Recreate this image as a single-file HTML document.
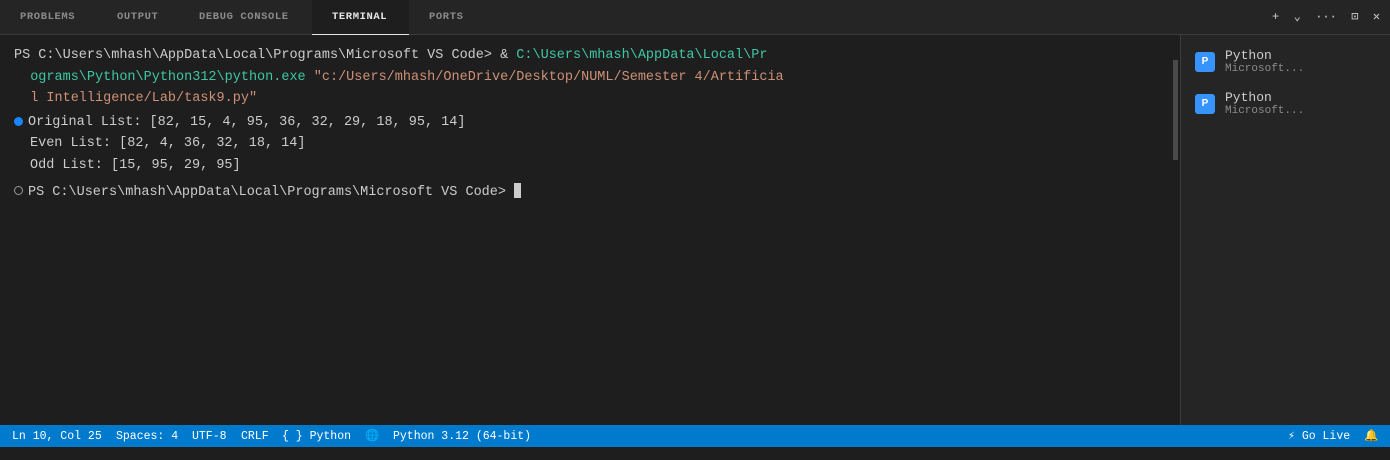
<!DOCTYPE html>
<html><head><style>
*{margin:0;padding:0;box-sizing:border-box}
body{width:1390px;height:460px;background:#1e1e1e;font-family:"Liberation Mono",monospace;overflow:hidden;position:relative;color:#cccccc}
.tabs{position:absolute;left:0;top:0;width:1390px;height:35px;background:#252526;border-bottom:1px solid #3a3a3a}
.tab{position:absolute;top:0;height:34px;line-height:34px;font-family:"Liberation Mono",monospace;font-size:10.5px;letter-spacing:0.6px;color:#8b8b8b;font-weight:bold}
.tab.act{background:#1e1e1e;color:#e7e7e7;border-bottom:1px solid #e7e7e7;height:35px}
.term{position:absolute;left:0;top:35px;width:1180px;height:390px;background:#1e1e1e}
.l{position:absolute;left:14px;font-size:13.5px;white-space:pre;color:#cccccc}
.g{color:#3ec7a4}
.o{color:#ce9178}
.side{position:absolute;left:1180px;top:35px;width:210px;height:390px;background:#252526;border-left:1px solid #3c3c3c}
.it{position:absolute;left:14px}
.ic{position:absolute;left:0;top:0;width:20px;height:20px;background:#3794ff;border-radius:3px;color:#fff;font-size:10px;font-weight:bold;text-align:center;line-height:20px;font-family:"Liberation Sans",sans-serif}
.n{position:absolute;left:30px;top:-4px;font-size:13px;color:#cccccc;white-space:nowrap}
.s{position:absolute;left:30px;top:11px;font-size:11px;color:#8b8b8b;white-space:nowrap}
.status{position:absolute;left:0;top:425px;width:1390px;height:22px;background:#007acc;color:#fff;font-size:11.5px;line-height:23px;white-space:pre}
.status span{position:absolute;top:0}
.sb{position:absolute;left:1173px;top:60px;width:5px;height:100px;background:#4a4a4a}
</style></head><body>
<div class="tabs">
<div class="tab" style="left:20px">PROBLEMS</div>
<div class="tab" style="left:117px">OUTPUT</div>
<div class="tab" style="left:199px">DEBUG CONSOLE</div>
<div class="tab act" style="left:312px;width:97px;padding-left:20px">TERMINAL</div>
<div class="tab" style="left:429px">PORTS</div>
<div style="position:absolute;left:1272px;top:9px;font-size:12px;color:#ccc;white-space:pre">+  ⌄  ···  ⊡  ✕</div>
</div>
<div class="term">
<div class="l" style="top:13px">PS C:\Users\mhash\AppData\Local\Programs\Microsoft VS Code&gt; &amp; <span class="g">C:\Users\mhash\AppData\Local\Pr</span></div>
<div class="l" style="top:35px">  <span class="g">ograms\Python\Python312\python.exe</span> <span class="o">"c:/Users/mhash/OneDrive/Desktop/NUML/Semester 4/Artificia</span></div>
<div class="l" style="top:56px">  <span class="o">l Intelligence/Lab/task9.py"</span></div>
<div style="position:absolute;left:14px;top:82px;width:9px;height:9px;border-radius:50%;background:#1a85ff"></div>
<div class="l" style="top:80px;left:28px">Original List: [82, 15, 4, 95, 36, 32, 29, 18, 95, 14]</div>
<div class="l" style="top:101px;left:30px">Even List: [82, 4, 36, 32, 18, 14]</div>
<div class="l" style="top:123px;left:30px">Odd List: [15, 95, 29, 95]</div>
<div style="position:absolute;left:14px;top:151px;width:9px;height:9px;border-radius:50%;border:1px solid #999"></div>
<div class="l" style="top:148px;left:28px">PS C:\Users\mhash\AppData\Local\Programs\Microsoft VS Code&gt; <span style="display:inline-block;width:7px;height:15px;background:#ccc;vertical-align:-3px"></span></div>
<div class="sb" style="top:25px"></div>
</div>
<div class="side">
<div class="it" style="top:17px"><div class="ic">P</div><div class="n">Python</div><div class="s">Microsoft...</div></div>
<div class="it" style="top:59px"><div class="ic">P</div><div class="n">Python</div><div class="s">Microsoft...</div></div>
</div>
<div class="status">
<span style="left:12px">Ln 10, Col 25</span>
<span style="left:116px">Spaces: 4</span>
<span style="left:192px">UTF-8</span>
<span style="left:241px">CRLF</span>
<span style="left:282px">{ } Python</span>
<span style="left:365px;color:#3a9ae0">🌐</span>
<span style="left:393px">Python 3.12 (64-bit)</span>
<span style="left:1288px">⚡ Go Live</span>
<span style="left:1364px;color:#f0c040">🔔</span>
</div>
</body></html>
